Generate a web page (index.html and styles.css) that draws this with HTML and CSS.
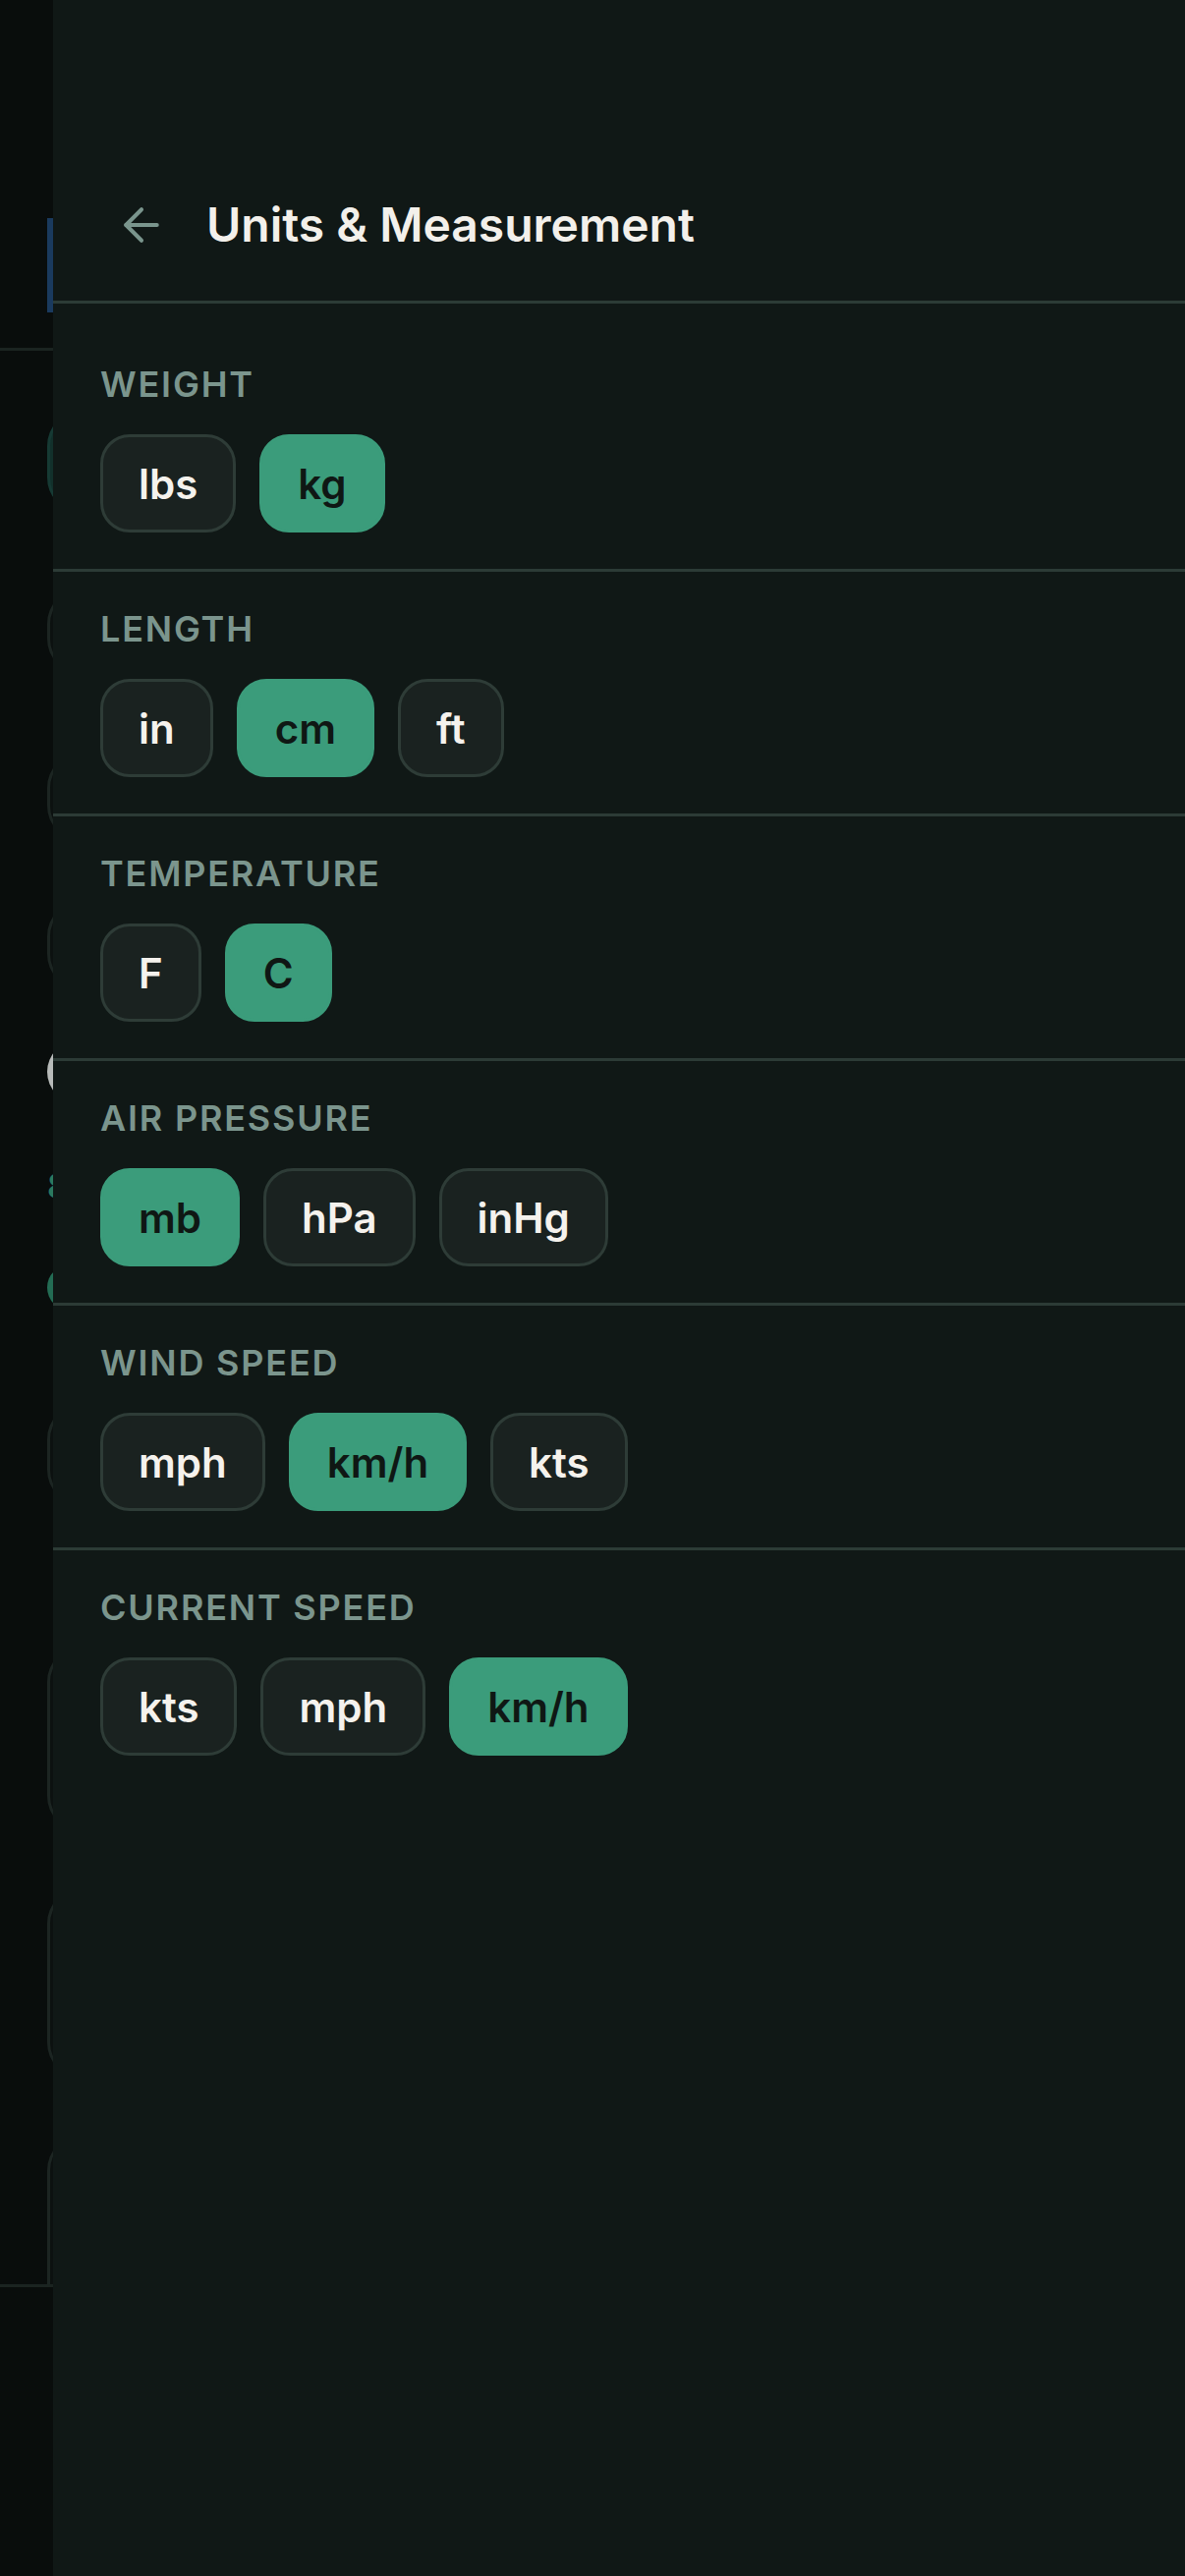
FILE: index.html
```html
<!DOCTYPE html>
<html lang="en">
<head>
    <meta charset="UTF-8">
    <meta name="viewport" content="width=device-width, initial-scale=1.0">
    <title>Units &amp; Measurement</title>
    <link rel="stylesheet" href="styles.css">
</head>
<body>
    <!-- page underneath the sheet, mostly hidden -->
    <div class="app">
        <div class="app-top">
            <div class="app-tab"></div>
        </div>
        <div class="app-list">
            <div class="app-pill"></div>
            <div class="app-card h87 mt77"></div>
            <div class="app-card h90 mt80"></div>
            <div class="app-card h90 mt61"></div>
            <div class="app-toggle"></div>
            <div class="app-num">8</div>
            <div class="app-dot"></div>
            <div class="app-card h103 mt95"></div>
            <div class="app-card h188 mt144"></div>
            <div class="app-card h193 mt58"></div>
            <div class="app-card app-card-last"></div>
        </div>
        <div class="app-nav"></div>
    </div>

    <div class="sheet">
        <div class="sheet-header">
            <button class="back-btn" aria-label="Back">
                <svg width="54" height="54" viewBox="0 0 24 24" fill="none" stroke="currentColor" stroke-width="1.8" stroke-linecap="round" stroke-linejoin="round">
                    <path d="M12 19l-7-7 7-7"/>
                    <path d="M19 12H5"/>
                </svg>
            </button>
            <h1 class="sheet-title">Units &amp; Measurement</h1>
        </div>

        <div class="sheet-body">
            <div class="unit-section">
                <div class="unit-label">Weight</div>
                <div class="unit-options">
                    <button class="unit-opt">lbs</button>
                    <button class="unit-opt active">kg</button>
                </div>
            </div>

            <div class="unit-section">
                <div class="unit-label">Length</div>
                <div class="unit-options">
                    <button class="unit-opt">in</button>
                    <button class="unit-opt active">cm</button>
                    <button class="unit-opt">ft</button>
                </div>
            </div>

            <div class="unit-section">
                <div class="unit-label">Temperature</div>
                <div class="unit-options">
                    <button class="unit-opt">F</button>
                    <button class="unit-opt active">C</button>
                </div>
            </div>

            <div class="unit-section">
                <div class="unit-label">Air Pressure</div>
                <div class="unit-options">
                    <button class="unit-opt active">mb</button>
                    <button class="unit-opt">hPa</button>
                    <button class="unit-opt">inHg</button>
                </div>
            </div>

            <div class="unit-section">
                <div class="unit-label">Wind Speed</div>
                <div class="unit-options">
                    <button class="unit-opt">mph</button>
                    <button class="unit-opt active">km/h</button>
                    <button class="unit-opt">kts</button>
                </div>
            </div>

            <div class="unit-section last">
                <div class="unit-label">Current Speed</div>
                <div class="unit-options">
                    <button class="unit-opt">kts</button>
                    <button class="unit-opt">mph</button>
                    <button class="unit-opt active">km/h</button>
                </div>
            </div>
        </div>
    </div>
</body>
</html>
```

FILE: styles.css
```css
* {
    margin: 0;
    padding: 0;
    box-sizing: border-box;
}

body {
    font-family: Inter, "Noto Sans", sans-serif;
    background: #090d0c;
    color: #f3f0eb;
    min-height: 100vh;
    overflow: hidden;
}

/* ---------- background page ---------- */

.app {
    height: 2622px;
    display: flex;
    flex-direction: column;
}

.app-top {
    height: 357px;
    padding-top: 222px;
    padding-left: 48px;
    border-bottom: 3px solid #1b2421;
}

.app-tab {
    height: 96px;
    background: #1a3a5e;
}

.app-list {
    flex: 1;
    padding-left: 48px;
    display: flex;
    flex-direction: column;
}

.app-pill {
    margin-top: 61px;
    height: 104px;
    border-radius: 36px;
    background: #12302b;
    border: 3px solid #163a34;
}

.app-card {
    border-radius: 36px;
    background: #0c1110;
    border: 3px solid #1c2522;
}

.h87 { height: 87px; }
.h90 { height: 90px; }
.h103 { height: 103px; }
.h188 { height: 188px; }
.h193 { height: 193px; }
.mt58 { margin-top: 58px; }
.mt61 { margin-top: 61px; }
.mt77 { margin-top: 77px; }
.mt80 { margin-top: 80px; }
.mt95 { margin-top: 95px; }
.mt144 { margin-top: 144px; }

.app-toggle {
    margin-top: 52px;
    height: 64px;
    border-radius: 32px;
    background: #b8bbba;
}

.app-num {
    margin-top: 64px;
    font-size: 36px;
    line-height: 40px;
    font-weight: 700;
    color: #2b7a5f;
}

.app-dot {
    margin-top: 60px;
    height: 47px;
    border-radius: 24px;
    background: #236c54;
}

.app-card-last {
    margin-top: 58px;
    flex: 1;
    border-bottom: none;
    border-radius: 36px 36px 0 0;
}

.app-nav {
    height: 297px;
    border-top: 3px solid #1b2421;
    background: #090d0c;
}

/* ---------- sheet ---------- */

.sheet {
    position: fixed;
    top: 0;
    left: 54px;
    right: 0;
    bottom: 0;
    background: #101816;
}

.sheet-header {
    display: flex;
    align-items: center;
    gap: 24px;
    padding: 187px 48px 35px;
    border-bottom: 3px solid #2c3b36;
}

.back-btn {
    display: flex;
    align-items: center;
    justify-content: center;
    padding: 15px;
    background: none;
    border: none;
    color: #7a958d;
}

.sheet-title {
    font-size: 48px;
    line-height: 60px;
    font-weight: 600;
    color: #f3f0eb;
}

.sheet-body {
    padding-top: 24px;
}

.unit-section {
    padding: 36px 48px 37px;
    border-bottom: 3px solid #2c3b36;
}

.unit-section.last {
    border-bottom: none;
}

.unit-label {
    font-size: 36px;
    line-height: 45px;
    font-weight: 600;
    letter-spacing: 1.8px;
    text-transform: uppercase;
    color: #7b958d;
    margin-bottom: 28px;
}

.unit-options {
    display: flex;
    gap: 24px;
}

.unit-opt {
    height: 100px;
    padding: 0 36px;
    display: flex;
    align-items: center;
    border-radius: 30px;
    border: 3px solid #2e3c37;
    background: #1a2220;
    color: #f5f2ed;
    font-family: Inter, "Noto Sans", sans-serif;
    font-size: 42px;
    font-weight: 600;
}

.unit-opt.active {
    background: #3b9c7b;
    border-color: #3b9c7b;
    color: #0f1714;
}
```
